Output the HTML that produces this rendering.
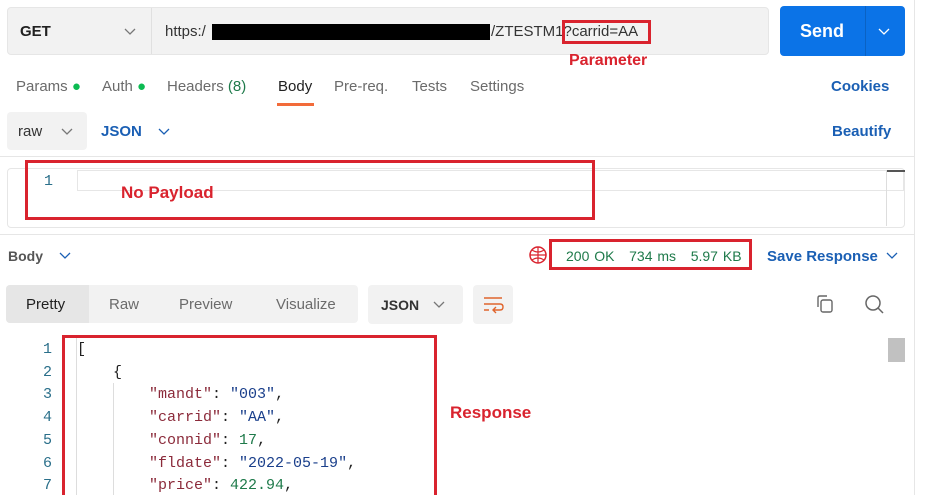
<!DOCTYPE html>
<html><head><style>
*{margin:0;padding:0;box-sizing:border-box}
html{overflow:hidden;height:495px}
body{width:932px;height:495px;overflow:hidden;background:#fff;font-family:"Liberation Sans",sans-serif;position:relative;color:#212121}
.a{position:absolute}
.mono{font-family:"Liberation Mono",monospace;font-size:15px}
.red{border:3px solid #d9232e}
.rt{color:#d9232e;font-weight:bold}
.tab{font-size:15px;color:#6b6b6b;top:78px}
.ln{left:0;width:52px;text-align:right;color:#2a6f8a}
</style></head><body>
<div class="a" style="left:7px;top:7px;width:762px;height:48px;background:#f2f2f2;border:1px solid #e6e6e6;border-radius:4px"></div>
<div class="a" style="left:151px;top:8px;width:1px;height:46px;background:#e0e0e0"></div>
<div class="a" style="left:20px;top:23px;font-size:15px;font-weight:bold;color:#212121">GET</div>
<svg class="a" style="left:124px;top:28px" width="12" height="8"><path d="M1 1l5 5 5-5" stroke="#777" fill="none" stroke-width="1.3"/></svg>
<div class="a" style="left:165px;top:23px;font-size:15px;color:#333">https:/</div>
<div class="a" style="left:212px;top:24px;width:278px;height:16px;background:#000"></div>
<div class="a" style="left:491px;top:23px;font-size:15px;color:#333">/ZTESTM1?carrid=AA</div>
<div class="a red" style="left:562px;top:20px;width:89px;height:24px"></div>
<div class="a rt" style="left:569px;top:52px;font-size:16px">Parameter</div>
<div class="a" style="left:780px;top:6px;width:125px;height:50px;background:#0b73e7;border-radius:4px"></div>
<div class="a" style="left:865px;top:6px;width:1px;height:50px;background:#0a62c4"></div>
<div class="a" style="left:800px;top:21px;font-size:18px;font-weight:bold;color:#fff">Send</div>
<svg class="a" style="left:878px;top:28px" width="12" height="8"><path d="M1 1l5 5 5-5" stroke="#fff" fill="none" stroke-width="1.3"/></svg>
<div class="a" style="left:914px;top:0;width:1px;height:495px;background:#e6e6e6"></div>

<div class="a tab" style="left:16px">Params <span style="color:#0cbb52">●</span></div>
<div class="a tab" style="left:102px">Auth <span style="color:#0cbb52">●</span></div>
<div class="a tab" style="left:167px">Headers <span style="color:#1e7a4a">(8)</span></div>
<div class="a tab" style="left:278px;color:#212121">Body</div>
<div class="a" style="left:277px;top:103px;width:37px;height:3px;background:#f26b3a"></div>
<div class="a tab" style="left:334px">Pre-req.</div>
<div class="a tab" style="left:412px">Tests</div>
<div class="a tab" style="left:470px">Settings</div>
<div class="a" style="left:831px;top:78px;font-size:15px;font-weight:bold;color:#1a5fb4">Cookies</div>

<div class="a" style="left:7px;top:112px;width:80px;height:38px;background:#f2f2f2;border-radius:4px"></div>
<div class="a" style="left:18px;top:123px;font-size:15px;color:#333">raw</div>
<svg class="a" style="left:61px;top:128px" width="12" height="8"><path d="M1 1l5 5 5-5" stroke="#777" fill="none" stroke-width="1.3"/></svg>
<div class="a" style="left:101px;top:123px;font-size:15px;font-weight:bold;color:#1a5fb4">JSON</div>
<svg class="a" style="left:158px;top:128px" width="12" height="8"><path d="M1 1l5 5 5-5" stroke="#1a5fb4" fill="none" stroke-width="1.3"/></svg>
<div class="a" style="left:832px;top:123px;font-size:15px;font-weight:bold;color:#1a5fb4">Beautify</div>
<div class="a" style="left:0;top:156px;width:914px;height:1px;background:#e6e6e6"></div>
<div class="a" style="left:7px;top:168px;width:898px;height:60px;border:1px solid #e6e6e6;border-radius:4px"></div>
<div class="a" style="left:77px;top:170px;width:827px;height:21px;border:1px solid #e6e6e6"></div>
<div class="a" style="left:886px;top:170px;width:19px;height:2px;background:#555"></div>
<div class="a" style="left:886px;top:170px;width:1px;height:56px;background:#ddd"></div>
<div class="a mono" style="left:44px;top:173px;color:#2a6f8a">1</div>
<div class="a red" style="left:25px;top:160px;width:570px;height:60px"></div>
<div class="a rt" style="left:121px;top:183px;font-size:17px">No Payload</div>
<div class="a" style="left:0;top:234px;width:914px;height:1px;background:#e6e6e6"></div>

<div class="a" style="left:8px;top:248px;font-size:14px;font-weight:bold;color:#555">Body</div>
<svg class="a" style="left:59px;top:252px" width="12" height="8"><path d="M1 1l5 5 5-5" stroke="#1a5fb4" fill="none" stroke-width="1.3"/></svg>
<svg class="a" style="left:529px;top:246px" width="20" height="20"><circle cx="9" cy="9" r="8" stroke="#d9232e" fill="none" stroke-width="1.5"/><path d="M1 9h16M9 1v16M3 4q6 4 12 0M3 14q6-4 12 0" stroke="#d9232e" fill="none" stroke-width="1.2"/></svg>
<div class="a red" style="left:549px;top:239px;width:203px;height:31px"></div>
<div class="a" style="left:566px;top:248px;font-size:14px;color:#1e7a4a;word-spacing:1px">200 OK &nbsp;&nbsp;734 ms &nbsp;&nbsp;5.97 KB</div>
<div class="a" style="left:767px;top:248px;font-size:15px;font-weight:bold;color:#1a5fb4">Save Response</div>
<svg class="a" style="left:886px;top:252px" width="12" height="8"><path d="M1 1l5 5 5-5" stroke="#1a5fb4" fill="none" stroke-width="1.3"/></svg>

<div class="a" style="left:6px;top:285px;width:352px;height:38px;background:#f2f2f2;border-radius:4px"></div>
<div class="a" style="left:6px;top:285px;width:83px;height:38px;background:#e6e6e6;border-radius:4px 0 0 4px"></div>
<div class="a" style="left:26px;top:296px;font-size:15px;color:#212121">Pretty</div>
<div class="a" style="left:109px;top:296px;font-size:15px;color:#6b6b6b">Raw</div>
<div class="a" style="left:179px;top:296px;font-size:15px;color:#6b6b6b">Preview</div>
<div class="a" style="left:276px;top:296px;font-size:15px;color:#6b6b6b">Visualize</div>
<div class="a" style="left:368px;top:285px;width:95px;height:39px;background:#f2f2f2;border-radius:4px"></div>
<div class="a" style="left:381px;top:297px;font-size:14px;font-weight:bold;color:#333">JSON</div>
<svg class="a" style="left:433px;top:301px" width="12" height="8"><path d="M1 1l5 5 5-5" stroke="#777" fill="none" stroke-width="1.3"/></svg>
<div class="a" style="left:473px;top:285px;width:40px;height:39px;background:#f2f2f2;border-radius:4px"></div>
<svg class="a" style="left:483px;top:296px" width="22" height="18"><path d="M1 2h18M1 8h16q3 0 3 3t-3 3h-6M13 11l-3 3 3 3M1 14h5" stroke="#e0642c" fill="none" stroke-width="1.4"/></svg>
<svg class="a" style="left:815px;top:294px" width="20" height="20"><rect x="6" y="6" width="11" height="12" rx="2" stroke="#666" fill="none" stroke-width="1.4"/><path d="M3 13V4q0-2 2-2h7" stroke="#666" fill="none" stroke-width="1.4"/></svg>
<svg class="a" style="left:864px;top:294px" width="22" height="22"><circle cx="9" cy="9" r="7" stroke="#666" fill="none" stroke-width="1.5"/><path d="M14 14l5 5" stroke="#666" stroke-width="1.5"/></svg>

<div class="a" style="left:888px;top:338px;width:17px;height:24px;background:#c1c1c1"></div>
<div class="a" style="left:76px;top:338px;width:1px;height:157px;background:#ddd"></div>
<div class="a" style="left:113px;top:383px;width:1px;height:112px;background:#ddd"></div>
<div class="a mono" style="left:0;top:339px;line-height:22.7px">
<div class="ln" style="position:absolute;top:0;">1<br>2<br>3<br>4<br>5<br>6<br>7</div>
<div style="position:absolute;left:77px;top:0;white-space:pre;color:#212121;width:400px">[
    {
        <span style="color:#8b2a3a">"mandt"</span>: <span style="color:#1a3f8b">"003"</span>,
        <span style="color:#8b2a3a">"carrid"</span>: <span style="color:#1a3f8b">"AA"</span>,
        <span style="color:#8b2a3a">"connid"</span>: <span style="color:#1e7a4a">17</span>,
        <span style="color:#8b2a3a">"fldate"</span>: <span style="color:#1a3f8b">"2022-05-19"</span>,
        <span style="color:#8b2a3a">"price"</span>: <span style="color:#1e7a4a">422.94</span>,</div>
</div>
<div class="a red" style="left:62px;top:335px;width:375px;height:160px;border-bottom:none"></div>
<div class="a rt" style="left:450px;top:403px;font-size:17px">Response</div>
</body></html>
